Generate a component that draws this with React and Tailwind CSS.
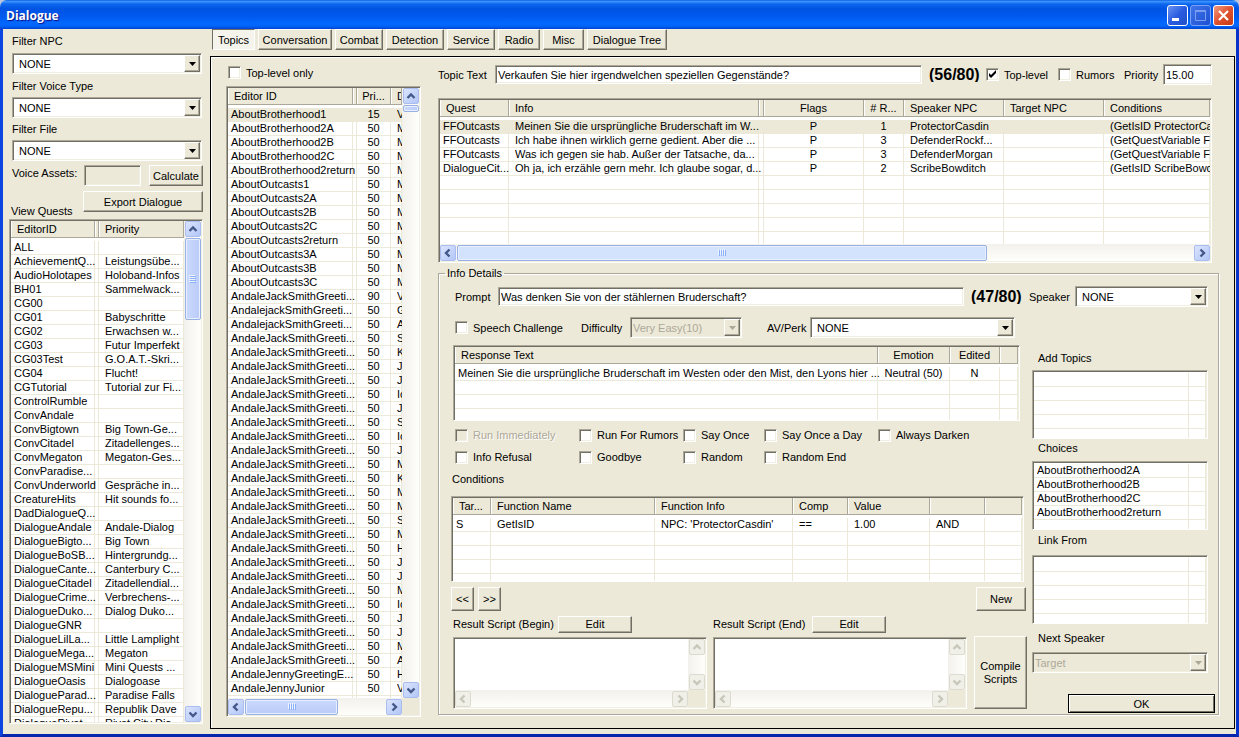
import React, { useState } from 'react';

const SUNKEN = 'border border-t-[#aca899] border-l-[#aca899] border-b-white border-r-white shadow-[inset_1px_1px_0_#716f64,inset_-1px_-1px_0_#f1efe2]';
const RAISED = 'border border-t-white border-l-white border-b-[#716f64] border-r-[#716f64] shadow-[inset_-1px_-1px_0_#aca899] bg-[#ece9d8]';

const quests = [
    ['ALL', ''],
    ['AchievementQ...', 'Leistungsübe...'],
    ['AudioHolotapes', 'Holoband-Infos'],
    ['BH01', 'Sammelwack...'],
    ['CG00', ''],
    ['CG01', 'Babyschritte'],
    ['CG02', 'Erwachsen w...'],
    ['CG03', 'Futur Imperfekt'],
    ['CG03Test', 'G.O.A.T.-Skri...'],
    ['CG04', 'Flucht!'],
    ['CGTutorial', 'Tutorial zur Fi...'],
    ['ControlRumble', ''],
    ['ConvAndale', ''],
    ['ConvBigtown', 'Big Town-Ge...'],
    ['ConvCitadel', 'Zitadellenges...'],
    ['ConvMegaton', 'Megaton-Ges...'],
    ['ConvParadise...', ''],
    ['ConvUnderworld', 'Gespräche in...'],
    ['CreatureHits', 'Hit sounds fo...'],
    ['DadDialogueQ...', ''],
    ['DialogueAndale', 'Andale-Dialog'],
    ['DialogueBigto...', 'Big Town'],
    ['DialogueBoSB...', 'Hintergrundg...'],
    ['DialogueCante...', 'Canterbury C...'],
    ['DialogueCitadel', 'Zitadellendial...'],
    ['DialogueCrime...', 'Verbrechens-...'],
    ['DialogueDuko...', 'Dialog Duko...'],
    ['DialogueGNR', ''],
    ['DialogueLilLa...', 'Little Lamplight'],
    ['DialogueMega...', 'Megaton'],
    ['DialogueMSMini', 'Mini Quests ...'],
    ['DialogueOasis', 'Dialogoase'],
    ['DialogueParad...', 'Paradise Falls'],
    ['DialogueRepu...', 'Republik Dave'],
    ['DialogueRivet...', 'Rivet City Dia...'],
].map(([id, name]) => [id, '', name]);

const JACK = 'AndaleJackSmithGreeti...';
const topics = [
    ['AboutBrotherhood1', '15', 'V'],
    ['AboutBrotherhood2A', '50', 'M'],
    ['AboutBrotherhood2B', '50', 'M'],
    ['AboutBrotherhood2C', '50', 'M'],
    ['AboutBrotherhood2return', '50', 'M'],
    ['AboutOutcasts1', '50', 'M'],
    ['AboutOutcasts2A', '50', 'M'],
    ['AboutOutcasts2B', '50', 'M'],
    ['AboutOutcasts2C', '50', 'M'],
    ['AboutOutcasts2return', '50', 'M'],
    ['AboutOutcasts3A', '50', 'M'],
    ['AboutOutcasts3B', '50', 'M'],
    ['AboutOutcasts3C', '50', 'M'],
    [JACK, '90', 'V'],
    ['AndalejackSmithGreeti...', '50', 'G'],
    ['AndalejackSmithGreeti...', '50', 'A'],
    ...['S', 'K', 'J', 'J', 'Ic', 'J', 'S', 'Ic', 'J', 'M', 'K', 'M', 'M', 'S', 'M', 'H', 'J', 'J', 'M', 'Ic', 'J', 'J', 'M', 'A'].map((t) => [JACK, '50', t]),
    ['AndaleJennyGreetingE...', '50', 'H'],
    ['AndaleJennyJunior', '50', 'V'],
    ['AndaleJennyJunior1', '50', 'G'],
].map(([id, prio, text]) => [id, '', prio, text]);

const infos = [
    ['FFOutcasts', 'Meinen Sie die ursprüngliche Bruderschaft im W...', '', 'P', '1', 'ProtectorCasdin', '', '(GetIsID ProtectorCasdin'],
    ['FFOutcasts', 'Ich habe ihnen wirklich gerne gedient. Aber die ...', '', 'P', '3', 'DefenderRockf...', '', '(GetQuestVariable FFO'],
    ['FFOutcasts', 'Was ich gegen sie hab. Außer der Tatsache, da...', '', 'P', '3', 'DefenderMorgan', '', '(GetQuestVariable FFO'],
    ['DialogueCit...', 'Oh ja, ich erzähle gern mehr. Ich glaube sogar, d...', '', 'P', '2', 'ScribeBowditch', '', '(GetIsID ScribeBowditch'],
];

const tabs = [
    ['Topics', 'w-[43px]'],
    ['Conversation', 'w-[74px]'],
    ['Combat', 'w-[48px]'],
    ['Detection', 'w-[58px]'],
    ['Service', 'w-[48px]'],
    ['Radio', 'w-[42px]'],
    ['Misc', 'w-[41px]'],
    ['Dialogue Tree', 'w-[80px]'],
];

const chevrons = {
    up: 'M4.5 10 8 6.5 11.5 10',
    down: 'M4.5 6.5 8 10 11.5 6.5',
    left: 'M9.5 4.5 6 8 9.5 11.5',
    right: 'M6.5 4.5 10 8 6.5 11.5',
};

const ScrollButton = ({ dir, disabled }) => (
    <button
        type="button"
        aria-label={`Scroll ${dir}`}
        disabled={disabled}
        className={`flex size-[16px] shrink-0 items-center justify-center rounded-[2px] border ${disabled ? 'border-[#dddbcf] bg-[#f1f0e8]' : 'border-[#a9bdf2] bg-gradient-to-br from-[#dbe4fe] to-[#b2c6f6]'}`}
    >
        <svg width="16" height="16" viewBox="0 0 16 16" fill="none" className="shrink-0">
            <path d={chevrons[dir]} stroke={disabled ? '#c9c7ba' : '#44598a'} strokeWidth="2.4" />
        </svg>
    </button>
);

const ScrollBar = ({ vertical, disabled, thumb, light, noGrip }) => (
    <div className={`flex shrink-0 gap-px ${vertical ? 'w-[17px] flex-col items-center bg-gradient-to-r' : 'h-[17px] items-center bg-gradient-to-b'} from-[#f3f1ec] to-[#fefefb]`}>
        <ScrollButton dir={vertical ? 'up' : 'left'} disabled={disabled} />
        <div className={`flex min-h-0 min-w-0 flex-1 items-center ${vertical ? 'flex-col' : ''}`}>
            {thumb && (
                <div
                    className={`flex items-center justify-center rounded-[2px] border border-[#98b1e4] shadow-[inset_0_0_0_1px_#e8effe] ${thumb}
                        ${light ? 'bg-[#d3e2fd]' : vertical ? 'bg-gradient-to-r from-[#cbd9fd] to-[#b9cbf8]' : 'bg-gradient-to-b from-[#cbd9fd] to-[#b9cbf8]'}`}
                >
                    {!noGrip && (
                        <svg width="8" height="8" viewBox="0 0 8 8">
                            <path stroke="#8cb0f8" d={vertical ? 'M1 1.500h6M1 3.500h6M1 5.500h6M1 7.500h6' : 'M1.500 1v6M3.500 1v6M5.500 1v6M7.500 1v6'} />
                            <path stroke="#eef4fe" d={vertical ? 'M0 .5h6M0 2.500h6M0 4.500h6M0 6.500h6' : 'M.5 0v6M2.500 0v6M4.500 0v6M6.500 0v6'} />
                        </svg>
                    )}
                </div>
            )}
        </div>
        <ScrollButton dir={vertical ? 'down' : 'right'} disabled={disabled} />
    </div>
);

// report-style list view: cols are { label, w, center }
const ListTable = ({ cols, rows = [], blank = 0, selected = -1, header = true, label }) => {
    const all = [...rows, ...Array.from({ length: blank }, () => cols.map(() => ''))];
    return (
        <table aria-label={label} className="w-full table-fixed border-separate border-spacing-0 bg-white text-left">
            <colgroup>
                {cols.map((c, i) => <col key={i} className={c.w} />)}
            </colgroup>
            {header && (
                <thead>
                    <tr>
                        {cols.map((c, i) => (
                            <th key={i} className="bg-white p-0 pb-[3px] font-normal">
                                <div className={`h-[17px] overflow-hidden whitespace-nowrap border-r border-b border-[#aca899] bg-[#ece9d8] leading-[17px] shadow-[inset_1px_0_0_#fff] ${c.center ? 'text-center' : c.label ? 'pl-[6px]' : ''}`}>{c.label}</div>
                            </th>
                        ))}
                    </tr>
                </thead>
            )}
            <tbody>
                {all.map((row, r) => (
                    <tr key={r} className={r === selected ? 'bg-[#ece9d8]' : ''}>
                        {row.map((cell, i) => (
                            <td key={i} className={`h-[14px] whitespace-nowrap border-r border-b border-[#ece9d8] p-0 leading-[13px] ${cols[i].center ? 'text-center' : i === 0 ? 'pl-[3px]' : cell ? 'pl-[6px]' : ''}`}>{cell}</td>
                        ))}
                    </tr>
                ))}
            </tbody>
        </table>
    );
};

const Check = ({ label, checked = false, disabled, className = '' }) => {
    const [on, setOn] = useState(checked);
    return (
        <label className={`flex items-center gap-[5px] whitespace-nowrap ${disabled ? 'text-[#aca899] [text-shadow:1px_1px_0_#fff]' : ''} ${className}`}>
            <span className="relative flex">
                <input
                    type="checkbox"
                    checked={on}
                    disabled={disabled}
                    onChange={() => setOn(!on)}
                    className={`size-[13px] appearance-none ${SUNKEN} ${disabled ? 'bg-[#ece9d8]' : 'bg-white'}`}
                />
                {on && (
                    <svg width="13" height="13" viewBox="0 0 13 13" className="pointer-events-none absolute inset-0">
                        <path d="M3 5v3l2 2 5-5V2L5 7z" fill="#000" />
                    </svg>
                )}
            </span>
            {label}
        </label>
    );
};

const Select = ({ id, value = 'NONE', disabled, className = '' }) => (
    <div className={`relative flex h-[21px] ${className}`}>
        <select
            id={id}
            disabled={disabled}
            className={`w-full appearance-none rounded-none ${SUNKEN} ${disabled ? 'bg-[#ece9d8] pl-[2px] text-[#aca899] opacity-100' : 'bg-white pl-[6px]'}`}
        >
            <option>{value}</option>
        </select>
        <span className={`pointer-events-none absolute top-[2px] right-[2px] bottom-[2px] flex w-[16px] items-center justify-center ${RAISED}`}>
            <svg width="7" height="4" viewBox="0 0 7 4">
                <path d="M0 0h7L3.500 4z" fill={disabled ? '#aca899' : '#000'} />
            </svg>
        </span>
    </div>
);

const Button = ({ children, className = '' }) => (
    <button type="button" className={`flex items-center justify-center ${RAISED} ${className}`}>{children}</button>
);

const TextField = ({ id, value, className }) => (
    <input id={id} type="text" defaultValue={value} className={`min-w-0 bg-white pl-[2px] ${SUNKEN} ${className}`} />
);

const Counter = ({ children, className }) => (
    <div className={`h-[14px] overflow-hidden text-[16px] leading-[14px] font-bold ${className}`}>{children}</div>
);

const ScriptBox = ({ id, title, labelWidth }) => (
    <div className="flex min-w-0 flex-1 flex-col gap-[5px]">
        <div className="flex h-[16px] items-center">
            <label htmlFor={id} className={`whitespace-nowrap ${labelWidth}`}>{title}</label>
            <Button className="h-[17px] w-[74px]">Edit</Button>
        </div>
        <div className={`flex h-[72px] flex-col bg-[#ece9d8] p-px ${SUNKEN}`}>
            <div className="flex min-h-0 flex-1">
                <textarea id={id} className="min-w-0 flex-1 resize-none bg-white outline-none" />
                <ScrollBar vertical disabled />
            </div>
            <div className="mr-[17px] flex flex-col">
                <ScrollBar disabled />
            </div>
        </div>
    </div>
);

const SideList = ({ title, rows, className }) => (
    <div className={`mr-[10px] ml-[3px] h-[69px] overflow-hidden bg-white px-px pt-[2px] ${SUNKEN} ${className}`}>
        <ListTable label={title} header={false} cols={[{}, { w: 'w-[17px]' }]} rows={rows} blank={rows ? 1 : 5} />
    </div>
);

const TitleBar = () => (
    <header className="flex h-[29px] shrink-0 items-center rounded-t-[7px] bg-[linear-gradient(180deg,#0a5fe0_0%,#3a93ff_5%,#0e66ee_14%,#0054e3_30%,#0058ee_55%,#0268fe_80%,#0164f8_90%,#0043cf_100%)] pt-[2px] pr-[5px] pl-[6px]">
        <h1 className="flex-1 font-['Open_Sans',sans-serif] text-[12px] leading-[16px] font-bold text-white [text-shadow:1px_1px_1px_#0f1089]">Dialogue</h1>
        <div className="flex gap-[2px]">
            <button type="button" aria-label="Minimize" className="size-[21px] rounded-[3px] border border-white bg-gradient-to-br from-[#6a93f2] via-[#2a5be0] to-[#1f50c8]">
                <svg width="19" height="19" viewBox="0 0 19 19"><path d="M4 12h7v3H4z" fill="#fff" /></svg>
            </button>
            <button type="button" aria-label="Maximize" disabled className="size-[21px] rounded-[3px] border border-[#7aa0f2] bg-gradient-to-br from-[#3f74ea] to-[#1c4fd0]">
                <svg width="19" height="19" viewBox="0 0 19 19" fill="none" stroke="#7d9df0">
                    <path d="M4.500 5.500h10v9h-10z" /><path d="M4 5h11" strokeWidth="2" />
                </svg>
            </button>
            <button type="button" aria-label="Close" className="size-[21px] rounded-[3px] border border-white bg-gradient-to-br from-[#f09a80] via-[#e0512d] to-[#c83a12]">
                <svg width="19" height="19" viewBox="0 0 19 19" stroke="#fff" strokeWidth="2.200"><path d="m5 5 9 9M14 5l-9 9" /></svg>
            </button>
        </div>
    </header>
);

const Filters = () => (
    <aside className="flex w-[207px] shrink-0 flex-col pt-[5px] pr-[7px] pb-[10px] pl-[6px]">
        <div className="flex flex-col gap-[4px] pr-px pl-[3px]">
            <label htmlFor="f-npc">Filter NPC</label>
            <Select id="f-npc" className="my-px" />
            <label htmlFor="f-voice">Filter Voice Type</label>
            <Select id="f-voice" />
            <label htmlFor="f-file">Filter File</label>
            <Select id="f-file" />
        </div>
        <div className="mt-[4px] flex h-[21px] pl-[3px]">
            <label htmlFor="assets" className="w-[72px] pt-px">Voice Assets:</label>
            <input id="assets" type="text" readOnly className={`w-[57px] bg-[#ece9d8] ${SUNKEN}`} />
            <Button className="ml-auto w-[54px]">Calculate</Button>
        </div>
        <div className="mt-[5px] flex h-[27px] justify-between pl-[2px]">
            <span className="self-end">View Quests</span>
            <Button className="h-[21px] w-[120px]">Export Dialogue</Button>
        </div>
        <div className={`mt-px flex min-h-0 flex-1 overflow-hidden bg-white p-px ${SUNKEN}`}>
            <div className="min-w-0 flex-1 overflow-hidden">
                <ListTable label="Quests" cols={[{ label: 'EditorID', w: 'w-[84px]' }, { w: 'w-[4px]' }, { label: 'Priority' }]} rows={quests} />
            </div>
            <ScrollBar vertical thumb="w-[16px] h-[82px]" />
        </div>
    </aside>
);

const TopicList = () => (
    <section className="flex w-[195px] shrink-0 flex-col pt-[9px] pb-[11px]">
        <Check label="Top-level only" className="h-[13px] pl-[2px]" />
        <div className={`mt-[7px] flex min-h-0 flex-1 flex-col bg-[#ece9d8] p-px ${SUNKEN}`}>
            <div className="flex min-h-0 flex-1">
                <div className="min-w-0 flex-1 overflow-hidden bg-white">
                    <ListTable
                        label="Topics"
                        selected={0}
                        cols={[{ label: 'Editor ID', w: 'w-[125px]' }, { w: 'w-[4px]' }, { label: 'Pri...', w: 'w-[34px]', center: true }, { label: 'D' }]}
                        rows={topics}
                    />
                </div>
                <ScrollBar vertical noGrip thumb="w-[16px] h-[7px]" />
            </div>
            <div className="mr-[17px] flex flex-col">
                <ScrollBar thumb="h-[16px] w-[93px]" />
            </div>
        </div>
    </section>
);

const InfoDetails = () => (
    <fieldset className="mt-[3px] flex min-w-0 flex-1 flex-col border border-[#aca899] shadow-[1px_1px_0_#fff,inset_1px_1px_0_#fff]">
        <legend className="ml-[6px] h-[14px] px-[2px]">Info Details</legend>
        <div className="mt-[6px] flex h-[21px] items-center pr-[10px] pl-[16px]">
            <label htmlFor="prompt" className="w-[43px]">Prompt</label>
            <TextField id="prompt" value="Was denken Sie von der stählernen Bruderschaft?" className="h-[19px] flex-1" />
            <Counter className="ml-[7px] w-[58px]">(47/80)</Counter>
            <label htmlFor="speaker" className="w-[46px]">Speaker</label>
            <Select id="speaker" className="w-[133px]" />
        </div>
        <div className="flex">
            <div className="flex min-w-0 flex-1 flex-col pl-[12px]">
                <div className="mt-[10px] flex h-[21px] items-center pr-[14px] pl-[4px]">
                    <Check label="Speech Challenge" className="w-[126px]" />
                    <label htmlFor="difficulty" className="w-[49px]">Difficulty</label>
                    <Select id="difficulty" value="Very Easy(10)" disabled className="w-[112px]" />
                    <label htmlFor="perk" className="ml-[25px] w-[43px]">AV/Perk</label>
                    <Select id="perk" className="flex-1" />
                </div>
                <div className={`mt-[7px] mr-[9px] ml-[2px] h-[76px] overflow-hidden bg-white p-px ${SUNKEN}`}>
                    <ListTable
                        label="Responses"
                        cols={[{ label: 'Response Text' }, { label: 'Emotion', w: 'w-[72px]', center: true }, { label: 'Edited', w: 'w-[50px]', center: true }, { w: 'w-[18px]' }]}
                        rows={[['Meinen Sie die ursprüngliche Bruderschaft im Westen oder den Mist, den Lyons hier ...', 'Neutral (50)', 'N', '']]}
                        blank={3}
                    />
                </div>
                <div className="mt-[3px] grid grid-cols-[124px_104px_81px_114px_1fr] grid-rows-[22px_22px] pl-[4px]">
                    <Check label="Run Immediately" disabled />
                    <Check label="Run For Rumors" />
                    <Check label="Say Once" />
                    <Check label="Say Once a Day" />
                    <Check label="Always Darken" />
                    <Check label="Info Refusal" />
                    <Check label="Goodbye" />
                    <Check label="Random" />
                    <Check label="Random End" />
                </div>
                <h2 className="mt-[4px] pl-px">Conditions</h2>
                <div className={`mt-[10px] mr-[5px] h-[86px] overflow-hidden bg-white p-px ${SUNKEN}`}>
                    <ListTable
                        label="Conditions"
                        cols={[
                            { label: 'Tar...', w: 'w-[38px]' },
                            { label: 'Function Name' },
                            { label: 'Function Info', w: 'w-[138px]' },
                            { label: 'Comp', w: 'w-[55px]' },
                            { label: 'Value', w: 'w-[82px]' },
                            { w: 'w-[55px]' },
                            { w: 'w-[37px]' },
                        ]}
                        rows={[['S', 'GetIsID', "NPC: 'ProtectorCasdin'", '==', '1.00', 'AND', '']]}
                        blank={4}
                    />
                </div>
                <div className="mt-[5px] mr-[3px] flex h-[24px] gap-[4px]">
                    <Button className="w-[23px]">&lt;&lt;</Button>
                    <Button className="w-[23px]">&gt;&gt;</Button>
                    <Button className="ml-auto w-[50px]">New</Button>
                </div>
                <div className="mt-[5px] mr-[2px] ml-[2px] flex items-end">
                    <ScriptBox id="script-begin" title="Result Script (Begin)" labelWidth="w-[105px]" />
                    <div className="w-[6px]" />
                    <ScriptBox id="script-end" title="Result Script (End)" labelWidth="w-[99px]" />
                    <Button className="ml-[7px] h-[73px] w-[53px] shrink-0 leading-[13px]">Compile Scripts</Button>
                </div>
            </div>
            <div className="flex w-[189px] shrink-0 flex-col">
                <h2 className="mt-[44px] pl-[9px]">Add Topics</h2>
                <SideList title="Add Topics" className="mt-[5px]" />
                <h2 className="mt-[2px] pl-[9px]">Choices</h2>
                <SideList
                    title="Choices"
                    className="mt-[6px]"
                    rows={[['AboutBrotherhood2A', ''], ['AboutBrotherhood2B', ''], ['AboutBrotherhood2C', ''], ['AboutBrotherhood2return', '']]}
                />
                <h2 className="mt-[3px] pl-[9px]">Link From</h2>
                <SideList title="Link From" className="mt-[8px]" />
                <label htmlFor="next" className="mt-[7px] pl-[9px]">Next Speaker</label>
                <Select id="next" value="Target" disabled className="mt-[7px] mr-[10px] ml-[3px]" />
                <button type="button" className="mt-[21px] mr-[3px] flex h-[19px] w-[147px] items-center justify-center self-end border border-black bg-[#ece9d8] shadow-[inset_1px_1px_0_#fff,inset_-1px_-1px_0_#716f64]">OK</button>
            </div>
        </div>
    </fieldset>
);

const App = () => {
    const [tab, setTab] = useState('Topics');

    return (
        <div className="flex h-screen flex-col overflow-hidden bg-[#b9c6dc] font-['Liberation_Sans',Arial,sans-serif] text-[11px] leading-[14px] text-black">
            <TitleBar />
            <div className="flex min-h-0 flex-1 border-3 border-t-0 border-r-[#0733c8] border-b-[#0626ac] border-l-[#0a45e0] bg-[#ece9d8]">
                <Filters />
                <main className="flex min-w-0 flex-1 flex-col">
                    <nav className="flex h-[21px] shrink-0 gap-[3px] pl-[2px]">
                        {tabs.map(([name, width]) => (
                            <button
                                key={name}
                                type="button"
                                onClick={() => setTab(name)}
                                className={`whitespace-nowrap ${width} ${tab === name ? 'border border-t-[#716f64] border-l-[#716f64] border-b-white border-r-white bg-[#f5f4ec]' : RAISED}`}
                            >
                                {name}
                            </button>
                        ))}
                    </nav>
                    <div className="mt-[6px] mr-px mb-[5px] flex min-h-0 flex-1 border border-black pr-[15px] pl-[15px] shadow-[inset_1px_1px_0_#fff]">
                        <TopicList />
                        <div className="ml-[17px] flex min-w-0 flex-1 flex-col pt-[7px] pb-[13px]">
                            <div className="mr-[7px] flex h-[21px] shrink-0 items-center">
                                <label htmlFor="topic" className="w-[57px]">Topic Text</label>
                                <TextField id="topic" value="Verkaufen Sie hier irgendwelchen speziellen Gegenstände?" className="h-[19px] flex-1" />
                                <Counter className="ml-[7px] w-[57px]">(56/80)</Counter>
                                <Check label="Top-level" checked className="w-[72px]" />
                                <Check label="Rumors" className="w-[66px]" />
                                <label htmlFor="priority" className="w-[39px]">Priority</label>
                                <TextField id="priority" value="15.00" className="h-[21px] w-[49px]" />
                            </div>
                            <div className={`mt-[13px] mr-[7px] flex h-[165px] shrink-0 flex-col overflow-hidden bg-white p-px ${SUNKEN}`}>
                                <div className="min-h-0 flex-1 overflow-hidden">
                                    <ListTable
                                        label="Infos"
                                        selected={0}
                                        cols={[
                                            { label: 'Quest', w: 'w-[69px]' },
                                            { label: 'Info' },
                                            { w: 'w-[5px]' },
                                            { label: 'Flags', w: 'w-[100px]', center: true },
                                            { label: '# R...', w: 'w-[40px]', center: true },
                                            { label: 'Speaker NPC', w: 'w-[100px]' },
                                            { label: 'Target NPC', w: 'w-[100px]' },
                                            { label: 'Conditions', w: 'w-[106px]' },
                                        ]}
                                        rows={infos}
                                        blank={5}
                                    />
                                </div>
                                <ScrollBar light thumb="h-[16px] w-[72%]" />
                            </div>
                            <InfoDetails />
                        </div>
                    </div>
                </main>
            </div>
        </div>
    );
};

export default App;
